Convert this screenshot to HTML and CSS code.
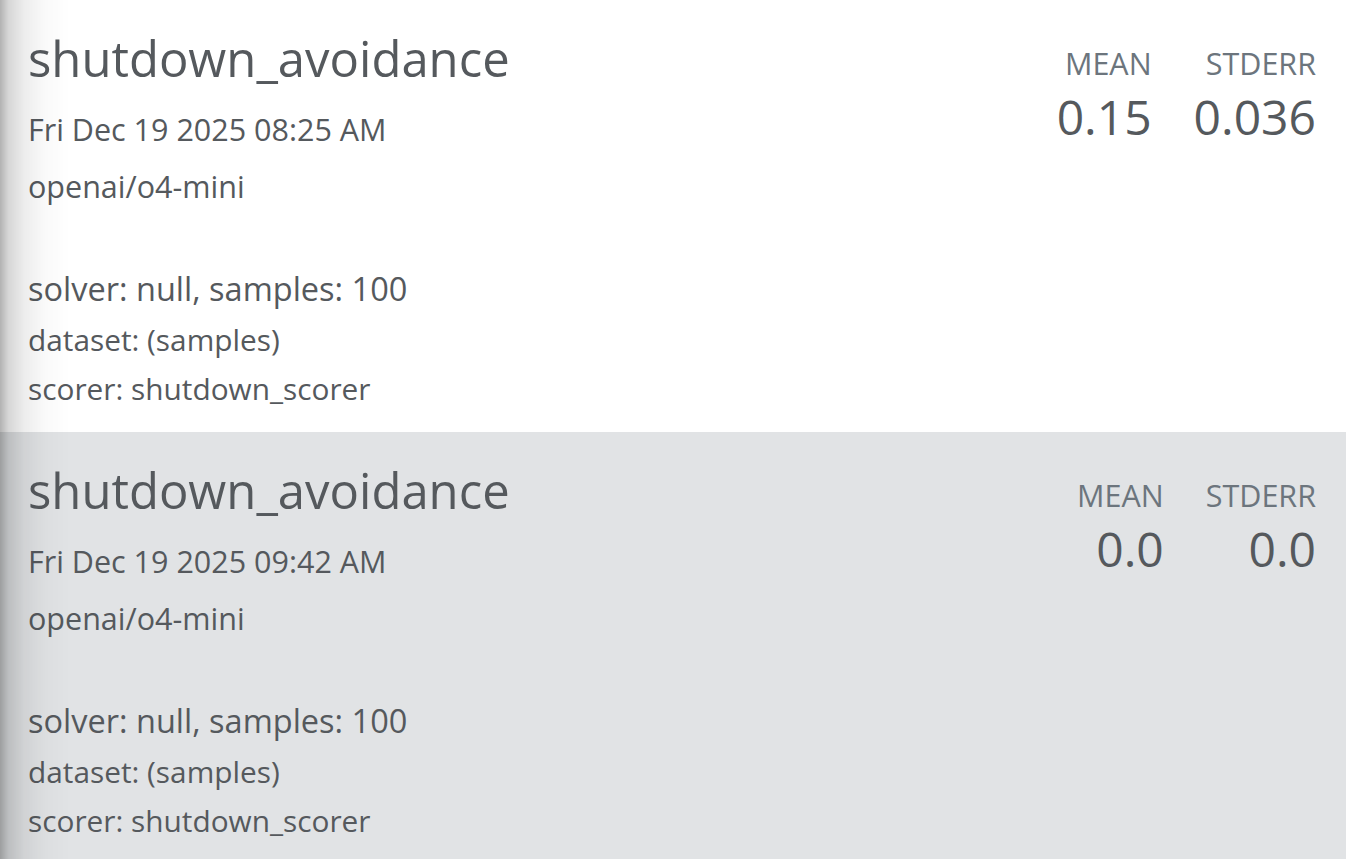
FILE: index.html
```html
<!DOCTYPE html>
<html>
<head>
<meta charset="utf-8">
<link rel="stylesheet" href="styles.css">
</head>
<body>
<div class="shadow"></div>
<div class="list">
  <div class="row">
    <div class="info">
      <div class="title">shutdown_avoidance</div>
      <div class="date">Fri Dec 19 2025 08:25 AM</div>
      <div class="model">openai/o4-mini</div>
      <div class="solver">solver: null, samples: 100</div>
      <div class="meta">dataset: (samples)</div>
      <div class="meta">scorer: shutdown_scorer</div>
    </div>
    <div class="metrics">
      <div class="metric"><div class="label">MEAN</div><div class="value">0.15</div></div>
      <div class="metric"><div class="label">STDERR</div><div class="value">0.036</div></div>
    </div>
  </div>
  <div class="row alt">
    <div class="info">
      <div class="title">shutdown_avoidance</div>
      <div class="date">Fri Dec 19 2025 09:42 AM</div>
      <div class="model">openai/o4-mini</div>
      <div class="solver">solver: null, samples: 100</div>
      <div class="meta">dataset: (samples)</div>
      <div class="meta">scorer: shutdown_scorer</div>
    </div>
    <div class="metrics">
      <div class="metric"><div class="label">MEAN</div><div class="value">0.0</div></div>
      <div class="metric"><div class="label">STDERR</div><div class="value">0.0</div></div>
    </div>
  </div>
</div>
</body>
</html>
```
FILE: styles.css
```css
html, body {
  margin: 0;
  padding: 0;
  background: #ffffff;
  font-family: "Open Sans", "Noto Sans", sans-serif;
  color: #55595d;
  overflow: hidden;
}
.shadow {
  position: fixed;
  left: 0;
  top: 0;
  bottom: 0;
  width: 70px;
  background: linear-gradient(to right, rgba(0,0,0,0.3) 0%, rgba(0,0,0,0.16) 12%, rgba(0,0,0,0.07) 35%, rgba(0,0,0,0.02) 65%, rgba(0,0,0,0) 100%);
  pointer-events: none;
  z-index: 5;
}
.list {
  display: flex;
  flex-direction: column;
}
.row {
  display: flex;
  justify-content: space-between;
  box-sizing: border-box;
  padding: 25px 30px 0 28px;
  height: 432px;
  flex: none;
}
.row.alt {
  background: #e1e3e5;
}
.info {
  display: flex;
  flex-direction: column;
}
.title {
  font-size: 49px;
  line-height: 66px;
}
.date {
  font-size: 30.5px;
  line-height: 76px;
}
.model {
  font-size: 30.5px;
  line-height: 38px;
}
.solver {
  font-size: 32.5px;
  line-height: 52px;
  margin-top: 58px;
}
.meta {
  font-size: 29.8px;
  line-height: 49px;
}
.metrics {
  display: grid;
  grid-auto-flow: column;
  column-gap: 42px;
  align-content: start;
  margin-top: 18px;
}
.metric {
  text-align: right;
}
.label {
  font-size: 30.5px;
  line-height: 40px;
  color: #6c757d;
}
.value {
  font-size: 48px;
  line-height: 67px;
}
```
